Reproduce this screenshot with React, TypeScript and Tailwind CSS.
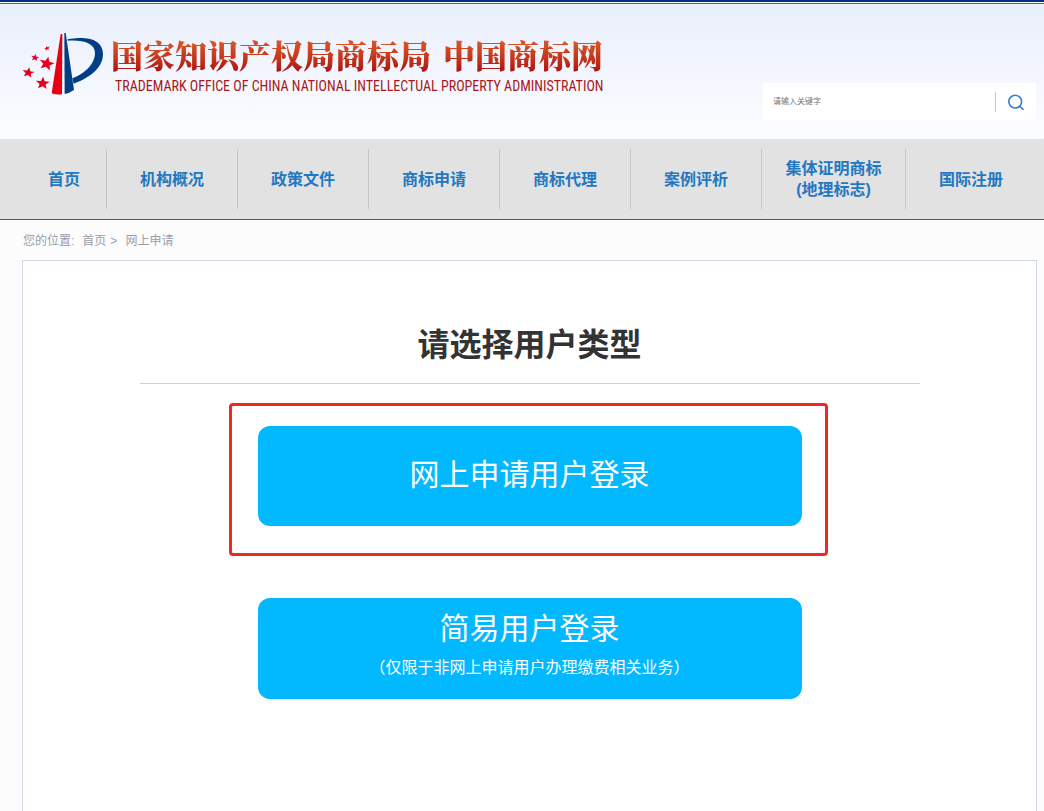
import clsx from "clsx";

const NAV_ITEMS = [
	{ label: "首页" },
	{ label: "机构概况" },
	{ label: "政策文件" },
	{ label: "商标申请" },
	{ label: "商标代理" },
	{ label: "案例评析" },
	{ label: "集体证明商标", note: "(地理标志)" },
	{ label: "国际注册" },
];

const STARS = [
	{ x: 96, y: 70, r: 10, tilt: -20, flat: 0.7 },
	{ x: 60, y: 98, r: 13, tilt: 10, flat: 0.85 },
	{ x: 95, y: 116, r: 24, tilt: 14, flat: 0.9 },
	{ x: 40, y: 143, r: 19, tilt: 10, flat: 0.85 },
	{ x: 83, y: 175, r: 22, tilt: 4, flat: 0.9 },
];

const STAR_POINTS =
	"0,-1 .26,-.34 .95,-.31 .41,.14 .59,.81 0,.44 -.59,.81 -.41,.14 -.95,-.31 -.26,-.34";

const Emblem = () => (
	<svg
		aria-hidden="true"
		className="h-16 w-[83px] shrink-0"
		viewBox="21 21 249 192"
	>
		{STARS.map((star) => (
			<polygon
				fill="#e60020"
				key={star.y}
				points={STAR_POINTS}
				transform={`translate(${star.x} ${star.y}) rotate(${star.tilt}) scale(${star.r} ${star.r * star.flat})`}
			/>
		))}
		<path d="M137 27h5l-1 181q-17 2-31-3z" fill="#e60012" />
		<path d="M148 24h4l25 171q-13 9-28 12z" fill="#003f88" />
		<path
			d="M158 43C202 34 264 36 264 88C264 134 212 164 176 176L172 160C206 147 240 119 240 84C240 54 204 44 158 47Z"
			fill="#003f88"
		/>
	</svg>
);

const SearchBox = () => (
	<form
		className="mt-[79px] mb-[19px] flex h-[37px] w-[273px] items-center bg-white"
		onSubmit={(event) => event.preventDefault()}
	>
		<input
			aria-label="请输入关键字"
			className="h-full min-w-0 flex-1 px-2.5 text-[8px] text-gray-700 outline-none placeholder:text-[#757575]"
			placeholder="请输入关键字"
			type="text"
		/>
		<button
			aria-label="搜索"
			className="flex h-5 w-[41px] items-center justify-center border-[#c8c8cc] border-l"
			type="submit"
		>
			<svg
				aria-hidden="true"
				className="size-4"
				fill="none"
				stroke="#3b7bd4"
				strokeLinecap="round"
				strokeWidth="1.6"
				viewBox="0 0 16 16"
			>
				<circle cx="7.2" cy="7.6" r="6.4" />
				<path d="M12 12.4l3 3" />
			</svg>
		</button>
	</form>
);

const Header = () => (
	<header className="border-[#002f83] border-t-2">
		<div className="mt-px flex justify-between gap-4 border-[#44679f] border-t bg-linear-to-b from-[#e9effc] via-[#f3f6fe] to-[#fcfdff] pr-2 pl-[22px]">
			<a className="mt-7 flex items-start gap-1.5 self-start" href="#home">
				<Emblem />
				<div className="mt-1 whitespace-nowrap">
					<h1 className="flex gap-3 bg-linear-to-b from-[#e0602c] to-[#b00c10] bg-clip-text font-['Noto_Serif_CJK_SC','Noto_Sans_CJK_SC',serif] font-black text-[32px] text-transparent leading-9">
						<span>国家知识产权局商标局</span>
						<span>中国商标网</span>
					</h1>
					<p className="mt-1 pl-1 font-['Liberation_Sans_Narrow','Roboto_Condensed','Liberation_Sans',sans-serif] text-[#a8161b] text-sm leading-5">
						TRADEMARK OFFICE OF CHINA NATIONAL INTELLECTUAL PROPERTY
						ADMINISTRATION
					</p>
				</div>
			</a>
			<SearchBox />
		</div>
	</header>
);

const MainNav = () => (
	<nav className="border-[#256b9f] border-b bg-[#e2e2e2] py-2.5 pr-2 pl-[22px]">
		<ul className="grid h-[60px] grid-cols-[85fr_131fr_131fr_131fr_131fr_131fr_144fr_130fr]">
			{NAV_ITEMS.map((item, index) => (
				<li
					className={clsx(
						"flex items-center justify-center",
						index < NAV_ITEMS.length - 1 && "border-[#c5c6cd] border-r"
					)}
					key={item.label}
				>
					<a
						className="text-center font-bold text-[#1f78c1] text-base leading-[21px]"
						href="#nav"
					>
						{item.label}
						{item.note && <span className="block">{item.note}</span>}
					</a>
				</li>
			))}
		</ul>
	</nav>
);

const Breadcrumb = () => (
	<div className="flex h-10 items-center pt-0.5 pl-[23px] text-[#999fa9] text-xs">
		<span className="mr-2">您的位置:</span>
		<a href="#home">首页</a>
		<span className="mr-2 ml-1">&gt;</span>
		<a href="#apply">网上申请</a>
	</div>
);

const LoginOptions = () => (
	<main className="mr-[7px] ml-[22px] flex-1 border border-[#d2d8e2] border-b-0 bg-white px-6 pb-28">
		<div className="mx-auto max-w-[780px]">
			<h2 className="border-[#d0d0d0] border-b pt-[59px] pb-[13px] text-center font-bold text-[#333] text-[32px] leading-[50px]">
				请选择用户类型
			</h2>
			<div className="mx-auto mt-[42px] flex max-w-[544px] flex-col gap-[72px]">
				<div className="relative">
					<button
						className="h-[100px] w-full rounded-xl bg-[#02b8ff] pb-1 text-[30px] text-white"
						type="button"
					>
						网上申请用户登录
					</button>
					<div className="pointer-events-none absolute -top-[23px] -right-[26px] -bottom-[30px] -left-[29px] rounded-sm border-3 border-[#ee2a20]" />
				</div>
				<button
					className="flex h-[101px] w-full flex-col items-center rounded-xl bg-[#02b8ff] pt-2 text-white"
					type="button"
				>
					<span className="text-[30px] leading-[46px]">简易用户登录</span>
					<span className="text-base leading-8">
						（仅限于非网上申请用户办理缴费相关业务）
					</span>
				</button>
			</div>
		</div>
	</main>
);

export default function App() {
	return (
		<div className="flex min-h-screen flex-col bg-[#fcfcfc] font-['Liberation_Sans','Noto_Sans_CJK_SC',sans-serif]">
			<Header />
			<MainNav />
			<Breadcrumb />
			<LoginOptions />
		</div>
	);
}
